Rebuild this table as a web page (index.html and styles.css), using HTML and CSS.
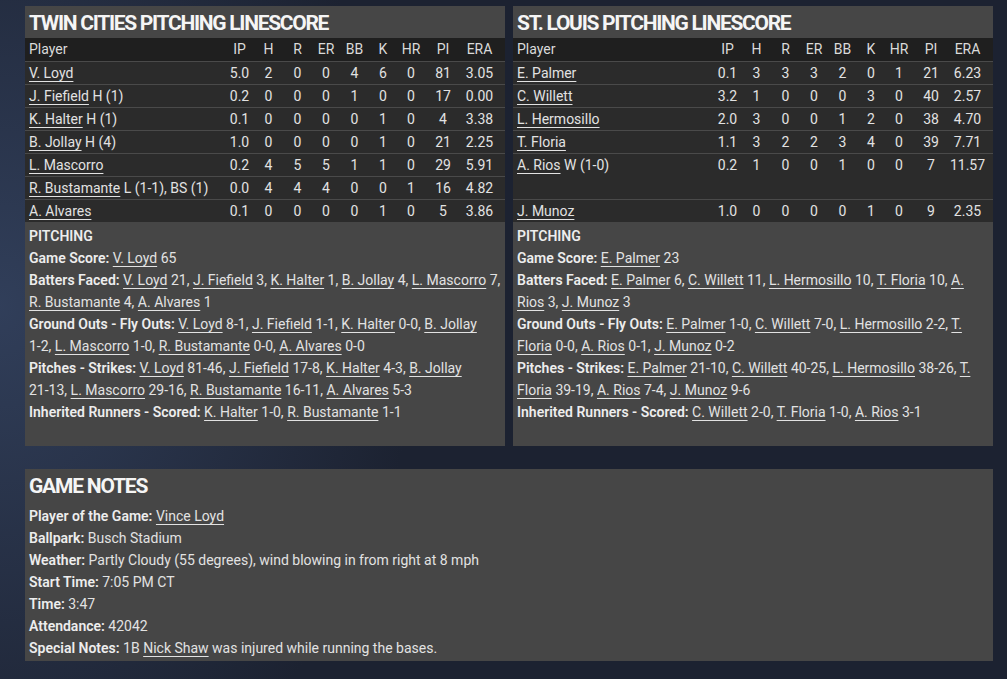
FILE: index.html
```html
<!DOCTYPE html>
<html>
<head>
<meta charset="utf-8">
<link rel="stylesheet" href="styles.css">
</head>
<body>
<div class="page">
  <div class="top">
    <section class="panel">
      <h2 class="panel-title">TWIN CITIES PITCHING LINESCORE</h2>
      <table class="ls">
        <colgroup><col><col class="c29"><col class="c29"><col class="c29"><col class="c28"><col class="c29"><col class="c28"><col class="c28"><col class="c36"><col class="c44"></colgroup>
        <thead><tr><th class="name">Player</th><th>IP</th><th>H</th><th>R</th><th>ER</th><th>BB</th><th>K</th><th>HR</th><th>PI</th><th class="era">ERA</th></tr></thead>
        <tbody>
          <tr><td class="name"><a href="#">V. Loyd</a></td><td>5.0</td><td>2</td><td>0</td><td>0</td><td>4</td><td>6</td><td>0</td><td>81</td><td class="era">3.05</td></tr>
          <tr><td class="name"><a href="#">J. Fiefield</a> H (1)</td><td>0.2</td><td>0</td><td>0</td><td>0</td><td>1</td><td>0</td><td>0</td><td>17</td><td class="era">0.00</td></tr>
          <tr><td class="name"><a href="#">K. Halter</a> H (1)</td><td>0.1</td><td>0</td><td>0</td><td>0</td><td>0</td><td>1</td><td>0</td><td>4</td><td class="era">3.38</td></tr>
          <tr><td class="name"><a href="#">B. Jollay</a> H (4)</td><td>1.0</td><td>0</td><td>0</td><td>0</td><td>0</td><td>1</td><td>0</td><td>21</td><td class="era">2.25</td></tr>
          <tr><td class="name"><a href="#">L. Mascorro</a></td><td>0.2</td><td>4</td><td>5</td><td>5</td><td>1</td><td>1</td><td>0</td><td>29</td><td class="era">5.91</td></tr>
          <tr><td class="name"><a href="#">R. Bustamante</a> L (1-1), BS (1)</td><td>0.0</td><td>4</td><td>4</td><td>4</td><td>0</td><td>0</td><td>1</td><td>16</td><td class="era">4.82</td></tr>
          <tr><td class="name"><a href="#">A. Alvares</a></td><td>0.1</td><td>0</td><td>0</td><td>0</td><td>0</td><td>1</td><td>0</td><td>5</td><td class="era">3.86</td></tr>
        </tbody>
      </table>
      <div class="notes">
        <div><b>PITCHING</b></div>
        <div><b>Game Score:</b> <a href="#">V. Loyd</a> 65</div>
        <div><b>Batters Faced:</b> <a href="#">V. Loyd</a> 21, <a href="#">J. Fiefield</a> 3, <a href="#">K. Halter</a> 1, <a href="#">B. Jollay</a> 4, <a href="#">L. Mascorro</a> 7, <a href="#">R. Bustamante</a> 4, <a href="#">A. Alvares</a> 1</div>
        <div><b>Ground Outs - Fly Outs:</b> <a href="#">V. Loyd</a> <span class="n">8-1,</span> <a href="#">J. Fiefield</a> <span class="n">1-1,</span> <a href="#">K. Halter</a> <span class="n">0-0,</span> <a href="#">B. Jollay</a> <span class="n">1-2,</span> <a href="#">L. Mascorro</a> <span class="n">1-0,</span> <a href="#">R. Bustamante</a> <span class="n">0-0,</span> <a href="#">A. Alvares</a> <span class="n">0-0</span></div>
        <div><b>Pitches - Strikes:</b> <a href="#">V. Loyd</a> <span class="n">81-46,</span> <a href="#">J. Fiefield</a> <span class="n">17-8,</span> <a href="#">K. Halter</a> <span class="n">4-3,</span> <a href="#">B. Jollay</a> <span class="n">21-13,</span> <a href="#">L. Mascorro</a> <span class="n">29-16,</span> <a href="#">R. Bustamante</a> <span class="n">16-11,</span> <a href="#">A. Alvares</a> <span class="n">5-3</span></div>
        <div><b>Inherited Runners - Scored:</b> <a href="#">K. Halter</a> <span class="n">1-0,</span> <a href="#">R. Bustamante</a> <span class="n">1-1</span></div>
      </div>
    </section>
    <section class="panel">
      <h2 class="panel-title">ST. LOUIS PITCHING LINESCORE</h2>
      <table class="ls">
        <colgroup><col><col class="c29"><col class="c29"><col class="c29"><col class="c28"><col class="c29"><col class="c28"><col class="c28"><col class="c36"><col class="c44"></colgroup>
        <thead><tr><th class="name">Player</th><th>IP</th><th>H</th><th>R</th><th>ER</th><th>BB</th><th>K</th><th>HR</th><th>PI</th><th class="era">ERA</th></tr></thead>
        <tbody>
          <tr><td class="name"><a href="#">E. Palmer</a></td><td>0.1</td><td>3</td><td>3</td><td>3</td><td>2</td><td>0</td><td>1</td><td>21</td><td class="era">6.23</td></tr>
          <tr><td class="name"><a href="#">C. Willett</a></td><td>3.2</td><td>1</td><td>0</td><td>0</td><td>0</td><td>3</td><td>0</td><td>40</td><td class="era">2.57</td></tr>
          <tr><td class="name"><a href="#">L. Hermosillo</a></td><td>2.0</td><td>3</td><td>0</td><td>0</td><td>1</td><td>2</td><td>0</td><td>38</td><td class="era">4.70</td></tr>
          <tr><td class="name"><a href="#">T. Floria</a></td><td>1.1</td><td>3</td><td>2</td><td>2</td><td>3</td><td>4</td><td>0</td><td>39</td><td class="era">7.71</td></tr>
          <tr class="tall"><td class="name"><a href="#">A. Rios</a> W (1-0)</td><td>0.2</td><td>1</td><td>0</td><td>0</td><td>1</td><td>0</td><td>0</td><td>7</td><td class="era">11.57</td></tr>
          <tr><td class="name"><a href="#">J. Munoz</a></td><td>1.0</td><td>0</td><td>0</td><td>0</td><td>0</td><td>1</td><td>0</td><td>9</td><td class="era">2.35</td></tr>
        </tbody>
      </table>
      <div class="notes">
        <div><b>PITCHING</b></div>
        <div><b>Game Score:</b> <a href="#">E. Palmer</a> 23</div>
        <div><b>Batters Faced:</b> <a href="#">E. Palmer</a> 6, <a href="#">C. Willett</a> 11, <a href="#">L. Hermosillo</a> 10, <a href="#">T. Floria</a> 10, <a href="#">A. Rios</a> 3, <a href="#">J. Munoz</a> 3</div>
        <div><b>Ground Outs - Fly Outs:</b> <a href="#">E. Palmer</a> <span class="n">1-0,</span> <a href="#">C. Willett</a> <span class="n">7-0,</span> <a href="#">L. Hermosillo</a> <span class="n">2-2,</span> <a href="#">T. Floria</a> <span class="n">0-0,</span> <a href="#">A. Rios</a> <span class="n">0-1,</span> <a href="#">J. Munoz</a> <span class="n">0-2</span></div>
        <div><b>Pitches - Strikes:</b> <a href="#">E. Palmer</a> <span class="n">21-10,</span> <a href="#">C. Willett</a> <span class="n">40-25,</span> <a href="#">L. Hermosillo</a> <span class="n">38-26,</span> <a href="#">T. Floria</a> <span class="n">39-19,</span> <a href="#">A. Rios</a> <span class="n">7-4,</span> <a href="#">J. Munoz</a> <span class="n">9-6</span></div>
        <div><b>Inherited Runners - Scored:</b> <a href="#">C. Willett</a> <span class="n">2-0,</span> <a href="#">T. Floria</a> <span class="n">1-0,</span> <a href="#">A. Rios</a> <span class="n">3-1</span></div>
      </div>
    </section>
  </div>
  <section class="panel game-notes">
    <h2 class="gn-title">GAME NOTES</h2>
    <div><b>Player of the Game:</b> <a href="#">Vince Loyd</a></div>
    <div><b>Ballpark:</b> Busch Stadium</div>
    <div><b>Weather:</b> Partly Cloudy (55 degrees), wind blowing in from right at 8 mph</div>
    <div><b>Start Time:</b> 7:05 PM CT</div>
    <div><b>Time:</b> 3:47</div>
    <div><b>Attendance:</b> 42042</div>
    <div><b>Special Notes:</b> 1B <a href="#">Nick Shaw</a> was injured while running the bases.</div>
  </section>
</div>
</body>
</html>
```
FILE: styles.css
```css
html, body {
  margin: 0;
  padding: 0;
}
body {
  width: 1007px;
  height: 679px;
  overflow: hidden;
  background:
    radial-gradient(ellipse 420px 520px at 0% 45%, rgba(50, 64, 92, 0.95) 0%, rgba(28, 34, 49, 0) 100%),
    #1c2231;
  font-family: Roboto, "Liberation Sans", sans-serif;
  font-size: 14px;
  color: #e2e2e2;
}
a {
  color: inherit;
  text-decoration: underline;
  text-underline-offset: 3px;
  text-decoration-thickness: 1px;
}
b {
  font-weight: 600;
  color: #ededed;
}
.n {
  white-space: nowrap;
}
.page {
  padding: 6px 14px 0 25px;
}
.top {
  display: grid;
  grid-template-columns: 480px 480px;
  gap: 8px;
}
.panel {
  background: #464646;
  display: flex;
  flex-direction: column;
}
.panel-title {
  margin: 0;
  height: 32px;
  line-height: 35px;
  padding: 0 4px;
  font-size: 21px;
  font-weight: 700;
  letter-spacing: -1.3px;
  color: #f5f5f5;
  white-space: nowrap;
}
.ls {
  width: 100%;
  table-layout: fixed;
  border-collapse: separate;
  border-spacing: 0;
}
.ls .c28 { width: 28px; }
.ls .c29 { width: 29px; }
.ls .c36 { width: 36px; }
.ls .c44 { width: 44px; }
.ls th {
  background: #1f1f1f;
  color: #dadada;
  font-weight: 400;
  line-height: 23px;
  padding: 0;
  text-align: center;
}
.ls td {
  background: #2b2b2b;
  border-top: 1px solid #4a4a4a;
  line-height: 22px;
  padding: 0;
  text-align: center;
  vertical-align: top;
  white-space: nowrap;
}
.ls .name {
  text-align: left;
  padding-left: 4px;
}
.ls .era {
  padding-right: 7px;
}
.ls tr.tall td {
  padding-bottom: 23px;
}
.notes {
  padding: 3px 4px 23px 4px;
  line-height: 22px;
}
.game-notes {
  margin-top: 23px;
  width: 960px;
  padding: 0 4px 2px;
  line-height: 22px;
}
.gn-title {
  margin: 0 0 2px;
  line-height: 34px;
  font-size: 21px;
  font-weight: 700;
  letter-spacing: -1.2px;
  color: #f5f5f5;
}
```
